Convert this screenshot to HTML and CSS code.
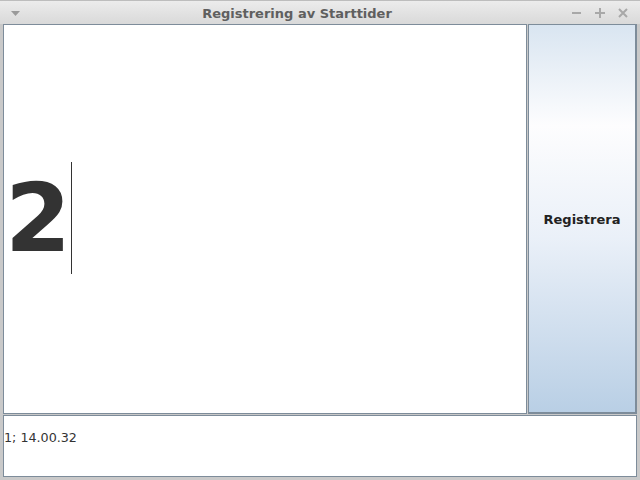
FILE: index.html
```html
<!DOCTYPE html>
<html>
<head>
<meta charset="utf-8">
<link rel="stylesheet" href="styles.css">
</head>
<body>
<div class="window">
  <div class="titlebar">
    <span class="menu-arrow">
      <svg width="9" height="6" viewBox="0 0 9 6"><path d="M0 0 L9 0 L4.5 5 Z" fill="#9a9a9a"/></svg>
    </span>
    <span class="title">Registrering av Starttider</span>
    <span class="controls">
      <svg width="10" height="10" viewBox="0 0 10 10"><rect x="0" y="4" width="9" height="2" fill="#a8a8a8"/></svg>
      <svg width="10" height="10" viewBox="0 0 10 10"><rect x="0" y="4" width="10" height="2" fill="#a8a8a8"/><rect x="4" y="0" width="2" height="10" fill="#a8a8a8"/></svg>
      <svg width="10" height="10" viewBox="0 0 10 10"><path d="M1 1 L9 9 M9 1 L1 9" stroke="#a8a8a8" stroke-width="2"/></svg>
    </span>
  </div>
  <div class="content">
    <div class="main">
      <div class="number-area">
        <span class="number">2</span><span class="caret"></span>
      </div>
      <div class="button">Registrera</div>
    </div>
    <div class="log">1; 14.00.32</div>
  </div>
</div>
</body>
</html>
```

FILE: styles.css
```css
html, body {
  margin: 0;
  padding: 0;
}
body {
  width: 640px;
  height: 480px;
  overflow: hidden;
  font-family: "DejaVu Sans", sans-serif;
}
.window {
  width: 640px;
  height: 480px;
  display: flex;
  flex-direction: column;
  background: #d4d4d4;
  box-sizing: border-box;
}
.titlebar {
  height: 24px;
  flex: none;
  display: flex;
  align-items: center;
  background: linear-gradient(#ececec, #d9d9d9);
  border-top: 1px solid #bdbdbd;
  box-sizing: border-box;
}
.menu-arrow {
  width: 30px;
  display: flex;
  justify-content: center;
  padding-top: 2px;
}
.title {
  flex: 1;
  text-align: center;
  font-weight: bold;
  font-size: 13px;
  color: #5f5f5f;
  padding-right: 8px;
  padding-top: 1px;
}
.controls {
  display: flex;
  gap: 13px;
  padding-right: 12px;
  padding-top: 1px;
}
.content {
  flex: 1;
  display: flex;
  flex-direction: column;
  padding: 0 3px 3px 3px;
  background: #c9c9c9;
}
.main {
  height: 390px;
  display: flex;
  gap: 1px;
}
.number-area {
  width: 524px;
  background: #fff;
  border: 1px solid #7d8c9a;
  box-sizing: border-box;
  display: flex;
  align-items: center;
  padding-left: 1px;
}
.number {
  font-family: "DejaVu Sans", sans-serif;
  font-weight: bold;
  font-size: 95px;
  line-height: 1;
  color: #333333;
  margin-top: -2px;
}
.caret {
  display: block;
  width: 1px;
  height: 112px;
  background: #333;
  margin-top: -2px;
}
.button {
  flex: 1;
  border: 1px solid #7d8c9a;
  border-width: 1px 2px 2px 1px;
  box-sizing: border-box;
  background: linear-gradient(#d9e5f1 0%, #fdfdfe 26%, #eaf0f8 55%, #b9cfe5 100%);
  display: flex;
  align-items: center;
  justify-content: center;
  font-weight: bold;
  font-size: 13px;
  color: #222;
  padding-top: 2px;
}
.log {
  flex: 1;
  margin-top: 1px;
  background: #fff;
  border: 1px solid #7d8c9a;
  box-shadow: inset 0 0 0 1px #fff, inset 0 -2px 0 0 #fff;
  font-size: 12.7px;
  color: #333;
  padding: 14px 0 0 0;
  box-sizing: border-box;
  line-height: 16px;
}
```
